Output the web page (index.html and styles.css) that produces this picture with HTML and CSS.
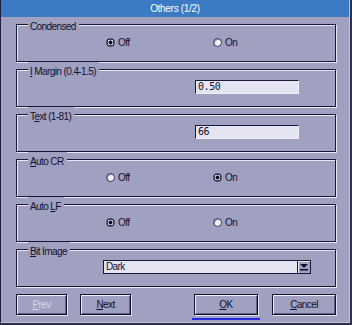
FILE: index.html
```html
<!DOCTYPE html>
<html lang="en">
<head>
    <meta charset="UTF-8">
    <title>Others (1/2)</title>
    <link rel="stylesheet" href="styles.css">
</head>
<body>
    <div class="window">
        <div class="titlebar">Others (1/2)</div>
        <div class="content">
            <fieldset class="group">
                <legend>Condensed</legend>
                <div class="radios">
                    <label class="radio"><span class="dot checked"></span>Off</label>
                    <label class="radio"><span class="dot"></span>On</label>
                </div>
            </fieldset>

            <fieldset class="group">
                <legend><u>I</u> Margin (0.4-1.5)</legend>
                <div class="field">
                    <div class="input">0.50</div>
                </div>
            </fieldset>

            <fieldset class="group">
                <legend>T<u>e</u>xt (1-81)</legend>
                <div class="field">
                    <div class="input">66</div>
                </div>
            </fieldset>

            <fieldset class="group">
                <legend><u>A</u>uto CR</legend>
                <div class="radios">
                    <label class="radio"><span class="dot"></span>Off</label>
                    <label class="radio"><span class="dot checked"></span>On</label>
                </div>
            </fieldset>

            <fieldset class="group">
                <legend>Auto <u>L</u>F</legend>
                <div class="radios">
                    <label class="radio"><span class="dot checked"></span>Off</label>
                    <label class="radio"><span class="dot"></span>On</label>
                </div>
            </fieldset>

            <fieldset class="group">
                <legend><u>B</u>it Image</legend>
                <div class="field wide">
                    <div class="select">
                        <span class="select-text">Dark</span>
                        <span class="arrow">
                            <svg width="10" height="10" viewBox="0 0 10 10">
                                <path d="M1 2h8L5 6z" fill="#101030"/>
                                <rect x="1" y="7" width="8" height="1.5" fill="#101030"/>
                            </svg>
                        </span>
                    </div>
                </div>
            </fieldset>

            <div class="buttons">
                <button class="btn small" disabled><u>P</u>rev</button>
                <button class="btn small"><u>N</u>ext</button>
                <span class="spacer"></span>
                <span class="focus"><button class="btn"><u>O</u>K</button></span>
                <button class="btn"><u>C</u>ancel</button>
            </div>
        </div>
    </div>
</body>
</html>
```

FILE: styles.css
```css
html, body {
    margin: 0;
    padding: 0;
    background: #30304a;
}
body {
    font-family: "Liberation Sans", Arial, sans-serif;
    font-size: 10px;
    letter-spacing: -0.6px;
    color: #101030;
}
.window {
    width: 348px;
    height: 322px;
    background: #a0a0c0;
    border-left: 1px solid #202040;
    border-right: 1px solid #c0c0d8;
    border-bottom: 1px solid #c0c0d8;
    box-sizing: content-box;
}
.titlebar {
    height: 17px;
    line-height: 17px;
    background: #3a7bc4;
    color: #ffffff;
    text-align: center;
    letter-spacing: -0.3px;
}
.content {
    padding: 0 13px 0 15px;
}
.group {
    margin: 0;
    padding: 3px 0 12px;
    min-width: 0;
    border: 1px solid #181838;
    box-shadow: inset 1px 1px 0 #e8e8f4, 1px 1px 0 #e8e8f4;
}
.group legend {
    margin-left: 11px;
    padding: 4px 3px 0 2px;
    line-height: 11px;
    height: 15px;
    box-sizing: border-box;
    background: #a0a0c0;
}
.radios {
    display: flex;
    height: 14px;
    align-items: center;
    padding-left: 89px;
}
.radio {
    display: flex;
    align-items: center;
    width: 107px;
    gap: 3px;
}
.dot {
    width: 9px;
    height: 9px;
    box-sizing: border-box;
    border-radius: 50%;
    border: 1px solid #303058;
    background: #f4f4fa;
    box-shadow: inset 1px 1px 0 #9090b0;
}
.dot.checked {
    background: radial-gradient(circle, #101020 0 1.8px, #e8e8f4 2.3px 2.8px, #101020 3.2px);
    box-shadow: none;
}
.field {
    display: flex;
    padding-left: 178px;
}
.field.wide {
    padding-left: 86px;
}
.input {
    width: 104px;
    height: 14px;
    box-sizing: border-box;
    border: 1px solid #181838;
    border-right-color: #f0f0f8;
    border-bottom-color: #f0f0f8;
    background: #e4e4f2;
    font-family: "DejaVu Sans Mono", monospace;
    font-size: 10px;
    letter-spacing: -0.4px;
    line-height: 12px;
    padding-left: 2px;
}
.select {
    display: flex;
    width: 208px;
    height: 14px;
    box-sizing: border-box;
    border: 1px solid #181838;
    background: #e4e4f2;
}
.select-text {
    flex: 1;
    line-height: 12px;
    padding-left: 2px;
}
.arrow {
    display: flex;
    align-items: center;
    justify-content: center;
    width: 12px;
    background: #a0a0c0;
    border-left: 1px solid #181838;
    box-shadow: inset 1px 1px 0 #e8e8f4;
}
.buttons {
    display: flex;
    align-items: flex-start;
    margin-top: 7px;
    gap: 13px;
}
.spacer {
    flex: 1;
}
.btn {
    width: 64px;
    height: 21px;
    padding: 0;
    margin: 0;
    font-family: "Liberation Sans", Arial, sans-serif;
    font-size: 10px;
    letter-spacing: -0.6px;
    color: #101030;
    background: #a0a0c0;
    border: 1px solid #101030;
    box-shadow: inset 1px 1px 0 #f0f0f8, inset -1px -1px 0 #606080, 1px 1px 0 #e0e0ee;
}
.btn.small {
    width: 51px;
}
.btn:disabled {
    color: #d8d8e8;
}
.focus {
    display: flex;
    padding: 0 2px 3px;
    margin-left: -3px;
    margin-right: -1px;
    border-bottom: 2px solid #2828e0;
}
```
